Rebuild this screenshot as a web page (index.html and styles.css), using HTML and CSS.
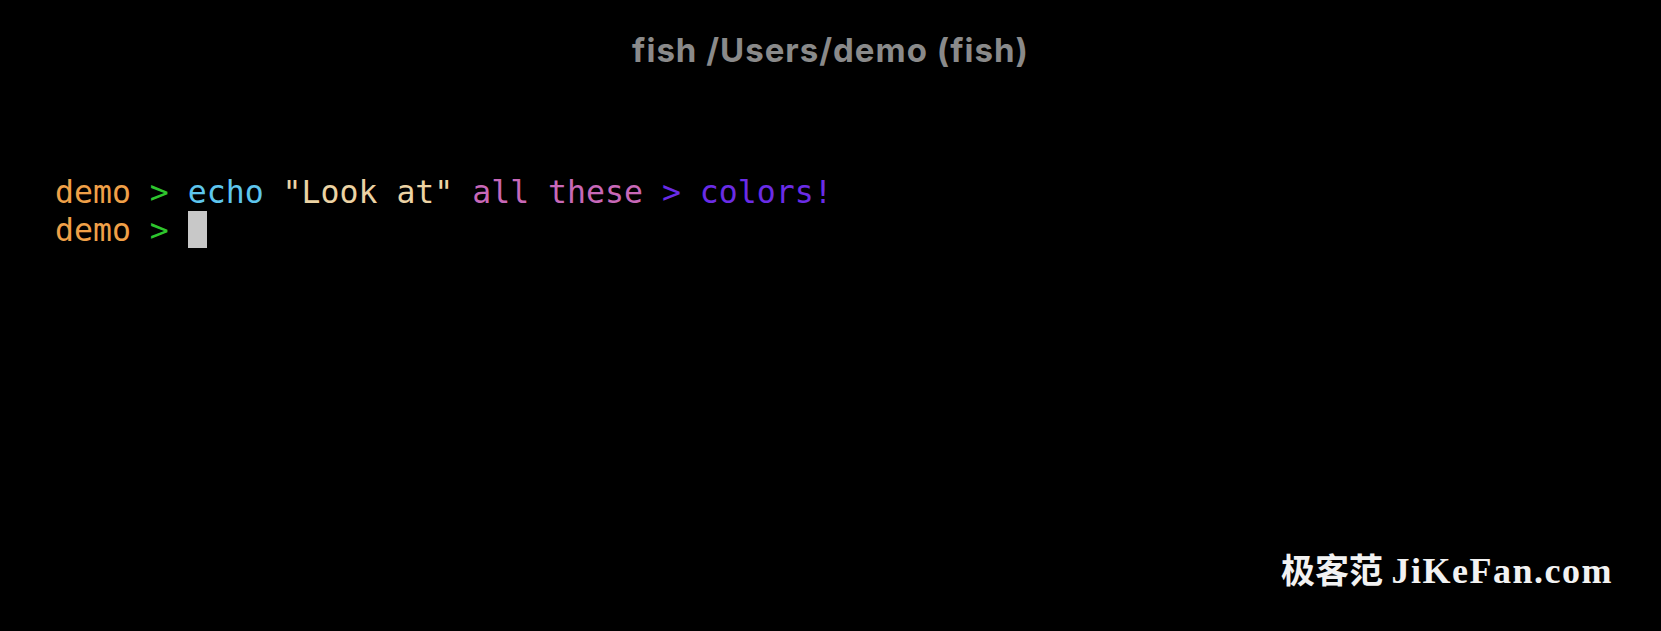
FILE: index.html
```html
<!DOCTYPE html>
<html lang="en">
<head>
<meta charset="utf-8">
<title>fish /Users/demo (fish)</title>
<link rel="stylesheet" href="styles.css">
</head>
<body>
<div class="window">
  <header class="titlebar">fish /Users/demo (fish)</header>
  <main class="terminal">
    <div class="line"><span class="user">demo</span> <span class="arrow">&gt;</span> <span class="cmd">echo</span> <span class="str">"Look at"</span> <span class="arg">all these</span> <span class="redir">&gt; colors!</span></div>
    <div class="line"><span class="user">demo</span> <span class="arrow">&gt;</span> <span class="cursor"></span></div>
  </main>
  <div class="watermark">极客范 <span class="wm-latin">JiKeFan.com</span></div>
</div>
</body>
</html>
```

FILE: styles.css
```css
html, body {
  margin: 0;
  padding: 0;
  background: #000;
}

.window {
  position: relative;
  width: 1661px;
  height: 631px;
  background: #000;
  overflow: hidden;
  display: flex;
  flex-direction: column;
}

.titlebar {
  margin-top: 30px;
  height: 40px;
  line-height: 40px;
  text-align: center;
  font-family: Inter, "Liberation Sans", sans-serif;
  font-weight: 700;
  font-size: 33px;
  letter-spacing: 1px;
  color: #8a8a8a;
}

.terminal {
  margin-top: 103px;
  padding-left: 55px;
  font-family: "DejaVu Sans Mono", "Liberation Mono", monospace;
  font-size: 31.5px;
  line-height: 38px;
}

.line {
  height: 38px;
  white-space: pre;
}

.user { color: #f0a048; }
.arrow { color: #2ec52e; }
.cmd { color: #5ec6ee; }
.str { color: #ecd3a4; }
.arg { color: #c868b8; }
.redir { color: #6a2ce6; }

.cursor {
  display: inline-block;
  width: 19px;
  height: 37px;
  background: #c8c8c8;
  vertical-align: top;
}

.watermark {
  position: absolute;
  right: 48px;
  top: 551px;
  line-height: 40px;
  font-family: "Liberation Serif", "Noto Sans CJK SC", serif;
  font-weight: 700;
  font-size: 34px;
  color: #f2f2f2;
  white-space: nowrap;
}

.wm-latin {
  font-size: 36px;
  letter-spacing: 1.5px;
}
```
